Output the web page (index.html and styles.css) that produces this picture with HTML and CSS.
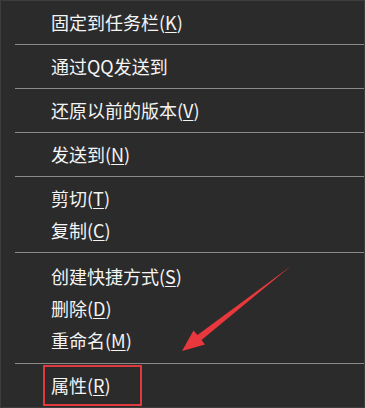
FILE: index.html
```html
<!DOCTYPE html>
<html lang="zh-CN">
<head>
<meta charset="utf-8">
<title>菜单</title>
<link rel="stylesheet" href="styles.css">
</head>
<body>
<div class="menu">
  <div class="group">
    <div class="item">固定到任务栏(<u>K</u>)</div>
  </div>
  <div class="sep"></div>
  <div class="group">
    <div class="item">通过QQ发送到</div>
  </div>
  <div class="sep"></div>
  <div class="group">
    <div class="item">还原以前的版本(<u>V</u>)</div>
  </div>
  <div class="sep"></div>
  <div class="group">
    <div class="item">发送到(<u>N</u>)</div>
  </div>
  <div class="sep"></div>
  <div class="group">
    <div class="item">剪切(<u>T</u>)</div>
    <div class="item">复制(<u>C</u>)</div>
  </div>
  <div class="sep"></div>
  <div class="group group-wide">
    <div class="item">创建快捷方式(<u>S</u>)</div>
    <div class="item">删除(<u>D</u>)</div>
    <div class="item">重命名(<u>M</u>)</div>
  </div>
  <div class="sep"></div>
  <div class="group">
    <div class="item">属性(<u>R</u>)</div>
  </div>
  <div class="highlight"></div>
  <svg class="arrow" width="365" height="408" viewBox="0 0 365 408">
    <polygon points="291,266 201.5,340 205,344.5 182,351 193.5,330.5 197.5,335" fill="#e8383d"/>
  </svg>
</div>
</body>
</html>
```
FILE: styles.css
```css
html, body {
  margin: 0;
  padding: 0;
  background: #2b2b2b;
}
.menu {
  position: relative;
  width: 365px;
  height: 408px;
  box-sizing: border-box;
  background: #2b2b2b;
  border: 1px solid #3d3d3d;
  font-family: "Noto Sans CJK SC", "Noto Sans", sans-serif;
  font-size: 18px;
  color: #f4f4f4;
  overflow: hidden;
}
.group {
  padding: 5px 0 6px;
}
.group-wide {
  padding: 7px 0 7px;
}
.item {
  height: 32px;
  line-height: 32px;
  padding-left: 50px;
  white-space: nowrap;
}
.item u {
  text-decoration-thickness: 1px;
  text-underline-offset: 2px;
}
.sep {
  height: 1px;
  margin-left: 14px;
  background: #8a8a8a;
}
.highlight {
  position: absolute;
  left: 42px;
  top: 364px;
  width: 99px;
  height: 41px;
  box-sizing: border-box;
  border: 2px solid #e03a3e;
}
.arrow {
  position: absolute;
  left: -1px;
  top: -1px;
}
```
